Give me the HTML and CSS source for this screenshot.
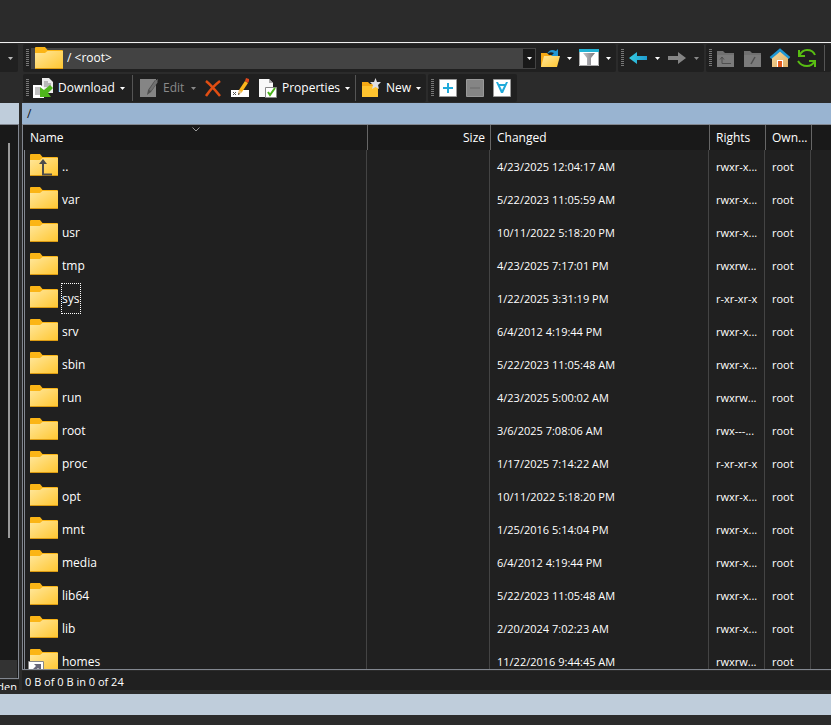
FILE: index.html
```html
<!DOCTYPE html>
<html lang="en">
<head>
<meta charset="utf-8">
<title>/ &lt;root&gt;</title>
<link rel="stylesheet" href="styles.css">
</head>
<body>
<svg class="defs" aria-hidden="true">
  <defs>
    <linearGradient id="gold" x1="0" y1="0" x2="1" y2="1"><stop offset="0" stop-color="#ffe79c"/><stop offset="1" stop-color="#ffc62f"/></linearGradient>
    <linearGradient id="sand" x1="0" y1="0" x2="1" y2="1"><stop offset="0" stop-color="#f5d79c"/><stop offset="1" stop-color="#dfb066"/></linearGradient>
    <linearGradient id="sky" x1="0" y1="0" x2="1" y2="0"><stop offset="0" stop-color="#35cbe0"/><stop offset="1" stop-color="#1f9bd0"/></linearGradient>
    <linearGradient id="steel" x1="0" y1="0" x2="1" y2="0"><stop offset="0" stop-color="#c4c4c8"/><stop offset="1" stop-color="#77777c"/></linearGradient>
    <symbol id="folder" viewBox="0 0 28 25">
      <path d="M0 1Q0 0 1 0H10L12.500 3H27Q28 3 28 4V12H0Z" fill="#fbb516"/>
      <path d="M0 6H10L12.500 4H28V21Q28 22 27 22H1Q0 22 0 21Z" fill="url(#gold)"/>
      <path d="M0 21H28Q28 22 27 22H1Q0 22 0 21Z" fill="#dc9b12"/>
    </symbol>
    <symbol id="caret" viewBox="0 0 5 3"><path d="M0 0H5L2.500 3Z" fill="currentColor"/></symbol>
  </defs>
</svg>
<div class="app">
  <header class="title"></header>

  <div class="bars">
    <div class="side-group"><svg class="caret"><use href="#caret"/></svg></div>
    <div class="toolbars">
      <div class="toolbar">
        <div class="group grow">
          <span class="grip"></span>
          <div class="combo">
            <svg class="folder"><use href="#folder"/></svg>
            <select aria-label="Directory"><option>/ &lt;root&gt;</option></select>
            <span class="drop"><svg class="caret"><use href="#caret"/></svg></span>
          </div>
          <button class="tool split" aria-label="Open directory">
            <svg class="icon" viewBox="0 0 20 20"><path d="M1 5H7L9 7H17V19H1Z" fill="#f5a914"/><path d="M4 8H20L17 19H1Z" fill="url(#gold)"/><path d="M7 6Q10 0 16 3L18 1V8H11L14 5Q10 3 7 6Z" fill="#2196d3"/></svg>
            <svg class="caret"><use href="#caret"/></svg>
          </button>
          <button class="tool split" aria-label="Filter">
            <svg class="icon" viewBox="0 0 20 20"><path d="M0 1H20V18H0Z" fill="#fff"/><path d="M0 1H20V4H0Z" fill="#22b2d4"/><path d="M.5 4V17.500H19.500V4" fill="none" stroke="#aaa"/><path d="M4 5H16L12 10V17H8V10Z" fill="url(#steel)"/></svg>
            <svg class="caret"><use href="#caret"/></svg>
          </button>
        </div>
        <div class="group">
          <span class="grip"></span>
          <button class="tool split" aria-label="Back">
            <svg class="icon" viewBox="0 0 20 20"><path d="M1 10L9 4V8H19V12H9V16Z" fill="url(#sky)"/></svg>
            <svg class="caret"><use href="#caret"/></svg>
          </button>
          <button class="tool split" aria-label="Forward" disabled>
            <svg class="icon" viewBox="0 0 20 20"><path d="M19 10L11 4V8H1V12H11V16Z" fill="#858585"/></svg>
            <svg class="caret"><use href="#caret"/></svg>
          </button>
        </div>
        <div class="group last">
          <span class="grip"></span>
          <button class="tool" aria-label="Parent directory" disabled>
            <svg class="icon" viewBox="0 0 20 20"><path d="M1 3H7L9 5H18V19H1Z" fill="#707070"/><path d="M1 7H18V19H1Z" fill="#7b7b7b"/><path d="M6 9V15.500H15M4 11.500L6 9L8 11.500" fill="none" stroke="#4e4e4e"/></svg>
          </button>
          <button class="tool" aria-label="Root directory" disabled>
            <svg class="icon" viewBox="0 0 20 20"><path d="M1 3H7L9 5H18V19H1Z" fill="#707070"/><path d="M1 7H18V19H1Z" fill="#7b7b7b"/><path d="M8 16L12 9" fill="none" stroke="#4e4e4e" stroke-width="1.500"/></svg>
          </button>
          <button class="tool" aria-label="Home directory">
            <svg class="icon" viewBox="0 0 20 20"><path d="M2 9L10 3L18 9V19H2Z" fill="url(#sand)"/><path d="M.5 10L10 2L19.500 10" fill="none" stroke="#1f97d4" stroke-width="2.500"/><path d="M7 12H13V19H7Z" fill="#fff"/><path d="M8 13H12V19H8Z" fill="#e25a1c"/></svg>
          </button>
          <button class="tool" aria-label="Refresh">
            <svg class="icon" viewBox="0 0 20 20" fill="none" stroke="#58bd12" stroke-width="2"><path d="M2 2V8H8M2.500 7.500Q5 2 10 2Q16 2 18 7"/><path d="M18 19V13H12M17.500 13.500Q15 18 10 18Q4 18 1 13"/></svg>
          </button>
          <span class="sep"></span>
        </div>
      </div>

      <div class="toolbar">
        <div class="group">
          <span class="grip"></span>
          <button class="tool download">
            <svg class="icon" viewBox="0 0 20 20"><path d="M9 0H16L20 4V15H9Z" fill="#ececec"/><path d="M0 7H8L11 10V20H0Z" fill="#fff"/><path d="M11 4H15M11 6H18M11 8H18M2 10H7M2 12H8M2 14H8M2 16H7" stroke="#858585"/><path d="M7 9L11 12L17 7L20 10L15 15L18 19H7Z" fill="#4fb51c"/></svg>
            <span>Download</span>
            <svg class="caret"><use href="#caret"/></svg>
          </button>
          <span class="sep"></span>
          <button class="tool edit" disabled>
            <svg class="icon" viewBox="0 0 20 20"><path d="M2 1H18V19H2Z" fill="#858585"/><path d="M9 17L10 12L17 2L20 4L13 14Z" fill="#4e4e4e"/><path d="M11 12L17 3L20 1L19 5L13 13Z" fill="#707070"/></svg>
            <span>Edit</span>
            <svg class="caret"><use href="#caret"/></svg>
          </button>
          <button class="tool" aria-label="Delete">
            <svg class="icon" viewBox="0 0 20 20"><path d="M3 3Q9 8 17 18M17 3Q9 9 3 18" fill="none" stroke="#e14e13" stroke-width="2.500"/></svg>
          </button>
          <button class="tool" aria-label="Rename">
            <svg class="icon" viewBox="0 0 20 20"><path d="M1 12H19V19H1Z" fill="#fff"/><path d="M3 14L6 17M6 14L3 17" stroke="#555"/><path d="M8 17L9 12L15 3L18 5L12 14Z" fill="#fbb41c"/><path d="M8 17L9 12L12 14Z" fill="#e9c48c"/><path d="M8 17L8.500 15L10 16Z" fill="#333"/><path d="M15 3L16 0L19 1V3L18 5Z" fill="#e2481c"/></svg>
          </button>
          <button class="tool properties">
            <svg class="icon" viewBox="0 0 20 20"><path d="M2 1H12L16 5V19H2Z" fill="#f8f8f8"/><path d="M12 1V5H16Z" fill="#aaa"/><path d="M8.500 9.500H19.500V19.500H8.500Z" fill="#fff" stroke="#888"/><path d="M11 14L13 17L18 10" fill="none" stroke="#49b31a" stroke-width="2"/></svg>
            <span>Properties</span>
            <svg class="caret"><use href="#caret"/></svg>
          </button>
          <span class="sep"></span>
          <button class="tool new">
            <svg class="icon" viewBox="0 0 20 20"><path d="M1 4H7L9 6H17V19H1Z" fill="#f5a914"/><path d="M1 8H17V19H1Z" fill="#ffc42f"/><path d="M14.500 0L16 4L20 4L17 7L18 11L14.500 9L11 11L12 7L9 4L13 4Z" fill="#dedee2"/></svg>
            <span>New</span>
            <svg class="caret"><use href="#caret"/></svg>
          </button>
        </div>
        <div class="group">
          <span class="grip"></span>
          <button class="tool" aria-label="Select">
            <svg class="icon" viewBox="0 0 20 20"><path d="M1.500 1.500H18.500V18.500H1.500Z" fill="#fff" stroke="#999"/><path d="M10 5V15M5 10H15" stroke="#20aada" stroke-width="2"/></svg>
          </button>
          <button class="tool" aria-label="Unselect" disabled>
            <svg class="icon" viewBox="0 0 20 20"><path d="M1.500 1.500H18.500V18.500H1.500Z" fill="#858585" stroke="#999"/><path d="M5 10H15" stroke="#777" stroke-width="2"/></svg>
          </button>
          <button class="tool" aria-label="Select all">
            <svg class="icon" viewBox="0 0 20 20"><path d="M1.500 1.500H18.500V18.500H1.500Z" fill="#fff" stroke="#999"/><path d="M4 4H6L7 6H13L14 4H16L11 15H9ZM8 8L10 12L12 8Z" fill="#20aada" fill-rule="evenodd"/></svg>
          </button>
        </div>
      </div>
    </div>
  </div>

  <main class="panes">
    <section class="side">
      <div class="path idle"></div>
      <div class="side-list"><div class="thumb"></div><div class="corner"></div></div>
      <div class="side-status">den</div>
    </section>
    <section class="remote">
      <div class="path">/</div>
      <div class="list">
        <table>
          <colgroup><col class="c-name"><col class="c-size"><col class="c-changed"><col class="c-rights"><col class="c-owner"><col></colgroup>
          <thead>
            <tr><th>Name<svg class="sort" viewBox="0 0 8 5"><path d="M.5 .5L4 4L7.500 .5" fill="none" stroke="#999"/></svg></th><th class="num">Size</th><th>Changed</th><th>Rights</th><th>Own...</th><th></th></tr>
          </thead>
          <tbody>
            <tr><td><div class="name"><svg class="folder" viewBox="0 0 28 25"><use href="#folder" width="28" height="25"/><path d="M13 8V20.500H22" fill="none" stroke="#4c4c4c" stroke-width="2"/><path d="M9 10L13 5L17 10Z" fill="#4c4c4c"/></svg><span>..</span></div></td><td></td><td>4/23/2025 12:04:17 AM</td><td>rwxr-x...</td><td>root</td><td></td></tr>
            <tr><td><div class="name"><svg class="folder"><use href="#folder"/></svg><span>var</span></div></td><td></td><td>5/22/2023 11:05:59 AM</td><td>rwxr-x...</td><td>root</td><td></td></tr>
            <tr><td><div class="name"><svg class="folder"><use href="#folder"/></svg><span>usr</span></div></td><td></td><td>10/11/2022 5:18:20 PM</td><td>rwxr-x...</td><td>root</td><td></td></tr>
            <tr><td><div class="name"><svg class="folder"><use href="#folder"/></svg><span>tmp</span></div></td><td></td><td>4/23/2025 7:17:01 PM</td><td>rwxrw...</td><td>root</td><td></td></tr>
            <tr><td><div class="name"><svg class="folder"><use href="#folder"/></svg><span class="focused">sys</span></div></td><td></td><td>1/22/2025 3:31:19 PM</td><td>r-xr-xr-x</td><td>root</td><td></td></tr>
            <tr><td><div class="name"><svg class="folder"><use href="#folder"/></svg><span>srv</span></div></td><td></td><td>6/4/2012 4:19:44 PM</td><td>rwxr-x...</td><td>root</td><td></td></tr>
            <tr><td><div class="name"><svg class="folder"><use href="#folder"/></svg><span>sbin</span></div></td><td></td><td>5/22/2023 11:05:48 AM</td><td>rwxr-x...</td><td>root</td><td></td></tr>
            <tr><td><div class="name"><svg class="folder"><use href="#folder"/></svg><span>run</span></div></td><td></td><td>4/23/2025 5:00:02 AM</td><td>rwxrw...</td><td>root</td><td></td></tr>
            <tr><td><div class="name"><svg class="folder"><use href="#folder"/></svg><span>root</span></div></td><td></td><td>3/6/2025 7:08:06 AM</td><td>rwx---...</td><td>root</td><td></td></tr>
            <tr><td><div class="name"><svg class="folder"><use href="#folder"/></svg><span>proc</span></div></td><td></td><td>1/17/2025 7:14:22 AM</td><td>r-xr-xr-x</td><td>root</td><td></td></tr>
            <tr><td><div class="name"><svg class="folder"><use href="#folder"/></svg><span>opt</span></div></td><td></td><td>10/11/2022 5:18:20 PM</td><td>rwxr-x...</td><td>root</td><td></td></tr>
            <tr><td><div class="name"><svg class="folder"><use href="#folder"/></svg><span>mnt</span></div></td><td></td><td>1/25/2016 5:14:04 PM</td><td>rwxr-x...</td><td>root</td><td></td></tr>
            <tr><td><div class="name"><svg class="folder"><use href="#folder"/></svg><span>media</span></div></td><td></td><td>6/4/2012 4:19:44 PM</td><td>rwxr-x...</td><td>root</td><td></td></tr>
            <tr><td><div class="name"><svg class="folder"><use href="#folder"/></svg><span>lib64</span></div></td><td></td><td>5/22/2023 11:05:48 AM</td><td>rwxr-x...</td><td>root</td><td></td></tr>
            <tr><td><div class="name"><svg class="folder"><use href="#folder"/></svg><span>lib</span></div></td><td></td><td>2/20/2024 7:02:23 AM</td><td>rwxr-x...</td><td>root</td><td></td></tr>
            <tr><td><div class="name"><svg class="folder" viewBox="0 0 28 25"><use href="#folder" width="28" height="25"/><path d="M-1.500 12.500H13.500V26H-1.500Z" fill="#fff" stroke="#888"/><path d="M4 15H11V22L8 19L5 22L3 20L6 17Z" fill="#667"/></svg><span>homes</span></div></td><td></td><td>11/22/2016 9:44:45 AM</td><td>rwxrw...</td><td>root</td><td></td></tr>
          </tbody>
        </table>
      </div>
      <div class="status">0 B of 0 B in 0 of 24</div>
    </section>
  </main>
  <footer class="session"></footer>
</div>
</body>
</html>
```
FILE: styles.css
```css
* { box-sizing: border-box; }
body {
  margin: 0;
  background: #2b2b2b;
  color: #fff;
  font: 11px/16px "Open Sans", "Noto Sans", sans-serif;
}
button, select { font: inherit; color: inherit; border: 0; margin: 0; background: none; }
svg { display: block; flex: none; overflow: visible; }
.defs { position: absolute; width: 0; height: 0; }
.app { display: flex; flex-direction: column; height: 100vh; overflow: hidden; }

.title { flex: none; height: 43px; border-bottom: 1px solid #f0f0f0; }

.bars { display: flex; gap: 5px; padding: 1px 0; }
.side-group {
  display: flex; align-items: center; justify-content: flex-end;
  width: 18px; height: 28px; padding-right: 5px;
  background: #202020; color: #bbb; border-radius: 0 2px 2px 0;
}
.toolbars { flex: 1; min-width: 0; display: flex; flex-direction: column; gap: 2px; }
.toolbar { display: flex; gap: 2px; height: 28px; }
.group { display: flex; align-items: center; padding: 0 1px 0 3px; background: #202020; border-radius: 2px; }
.grow { flex: 1; min-width: 0; }
.last { padding-right: 4px; }
.grip { width: 3px; height: 18px; margin-right: 1px; background: repeating-linear-gradient(#777 0 1px, #202020 1px 2px); }
.sep { width: 1px; height: 26px; margin: 0 2px 0 3px; background: #555; }
.caret { width: 5px; height: 3px; }
.icon { width: 20px; height: 20px; }

.tool { display: flex; align-items: center; gap: 5px; width: 27px; height: 28px; padding: 0 4px 0 3px; font-size: 12px; }
.tool:disabled { color: #8a8a8a; }
.tool .caret { margin-left: auto; }
.split { width: 39px; }
.download { width: 99px; }
.edit { width: 65px; }
.properties { width: 98px; }
.new { width: 67px; }

.combo { flex: 1; min-width: 0; display: flex; align-items: center; height: 21px; margin: 0 1px; padding-left: 4px; background: #434343; }
.combo select { flex: 1; min-width: 0; appearance: none; height: 21px; padding: 0 4px; font-size: 12px; }
.combo .folder { margin-top: 2px; }
.drop { display: flex; align-items: center; justify-content: center; width: 12px; height: 19px; margin-right: 1px; background: #191919; }
.folder { width: 28px; height: 25px; }

.panes { flex: 1; min-height: 0; display: flex; gap: 3px; }
.side { width: 19px; display: flex; flex-direction: column; }
.path { flex: none; height: 21px; padding: 0 5px; line-height: 22px; font-size: 12px; background: #99b4d1; color: #111; }
.idle { background: #bfcddb; }
.side-list {
  flex: 1; display: flex; flex-direction: column; justify-content: space-between;
  padding: 18px 0 0; background: #191919;
  border: 1px solid #828790; border-left: 0;
}
.thumb { flex: 0 1 395px; width: 2px; margin-left: 8px; background: #9a9a9a; }
.corner { height: 18px; margin-right: 1px; background: #333; }
.side-status { height: 10px; margin-top: 1px; padding-right: 2px; line-height: 14px; display: flex; justify-content: flex-end; overflow: hidden; background: #202020; }

.remote { flex: 1; min-width: 0; display: flex; flex-direction: column; }
.list { flex: 1; min-height: 0; overflow: hidden; border: 1px solid #828790; border-right: 0; background: #202020; }
table { width: 100%; border-collapse: separate; border-spacing: 0; table-layout: fixed; }
.c-name { width: 345px; }
.c-size { width: 123px; }
.c-changed { width: 219px; }
.c-rights { width: 56px; }
.c-owner { width: 46px; }
th, td { padding: 0 0 0 6px; text-align: left; font-weight: 400; white-space: nowrap; }
th { position: relative; height: 25px; background: #191919; border-right: 1px solid #666; font-size: 12px; }
.num { text-align: right; padding-right: 5px; }
th:first-child, td:first-child { padding-left: 7px; }
th:last-child { border-right: 0; }
.sort { position: absolute; top: 2px; left: calc(50% - 3px); width: 8px; height: 5px; }
td { height: 33px; background: linear-gradient(#444, #444) no-repeat right 1px top / 1px 100%; }
td:last-child { background: none; }
td:first-child { box-shadow: inset 1px 0 #191919, inset 2px 0 #828790; }
.name { display: flex; align-items: center; gap: 3px; height: 33px; font-size: 12px; }
.name span { padding: 0 2px 0 1px; line-height: 31px; }
.focused { outline: 1px dotted #fff; outline-offset: -1px; }

.status { flex: none; height: 19px; margin-top: 1px; padding: 0 3px; line-height: 22px; background: #202020; }
.session { flex: none; height: 21px; margin: 4px 0 10px; background: #bfcddb; }
```
